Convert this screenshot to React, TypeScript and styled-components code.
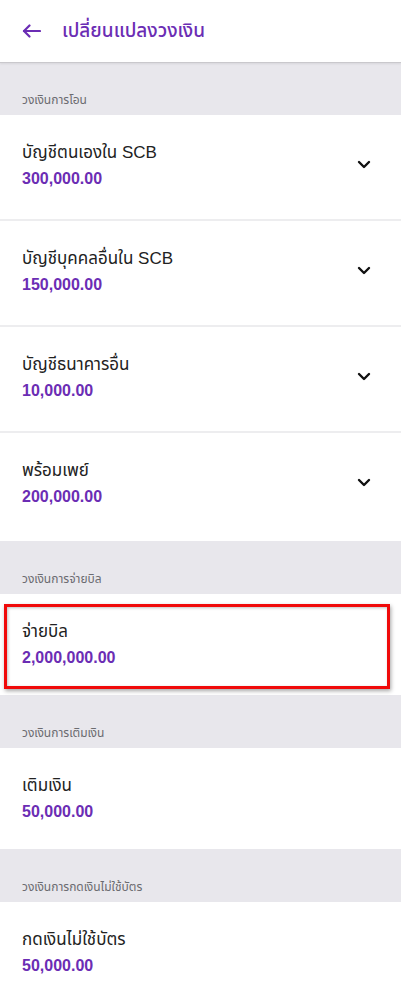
import React from "react";
import styled, { createGlobalStyle } from "styled-components";

const GlobalStyle = createGlobalStyle`
  html, body { margin: 0; padding: 0; background: #ffffff; }
  body { font-family: "Liberation Sans", "Noto Sans Thai", "Noto Sans", sans-serif; -webkit-font-smoothing: antialiased; }
  * { box-sizing: border-box; }
`;

const Page = styled.div`
  width: 401px;
  display: flex;
  flex-direction: column;
  background: #ffffff;
`;

const Header = styled.header`
  height: 63px;
  display: flex;
  align-items: center;
  gap: 21px;
  padding: 0 0 1px 22px;
  background: #ffffff;
  border-bottom: 1px solid #c9c8cc;
  box-shadow: 0 1px 2px rgba(0, 0, 0, 0.08);
  position: relative;
  z-index: 1;
`;

const BackButton = styled.button`
  width: 19px;
  height: 19px;
  padding: 0;
  border: 0;
  background: none;
  display: flex;
  align-items: center;
  justify-content: center;
  color: #6b2db4;
`;

const Title = styled.h1`
  margin: 0;
  font-size: 19px;
  font-weight: 500;
  color: #6b2db4;
  line-height: 24px;
`;

const SectionHeader = styled.div<{ $first?: boolean }>`
  height: ${(p) => (p.$first ? 52 : 53)}px;
  display: flex;
  align-items: flex-end;
  padding: 0 22px 6px;
  background: #e8e7ec;
  font-size: 12px;
  line-height: 18px;
  color: #6b6b70;
`;

const Row = styled.div<{ $tall?: boolean; $divider?: boolean; $extra?: number }>`
  position: relative;
  height: ${(p) => (p.$tall ? 106 : 101) + (p.$extra ?? 0)}px;
  display: flex;
  align-items: flex-start;
  padding: 26px 29px 0 22px;
  background: #ffffff;
  border-bottom: ${(p) => (p.$divider ? "2px solid #ededef" : "none")};
`;

const RowText = styled.div`
  flex: 1;
  display: flex;
  flex-direction: column;
`;

const RowTitle = styled.div`
  font-size: 17px;
  line-height: 24px;
  color: #222222;
`;

const Amount = styled.div`
  font-size: 16px;
  line-height: 28px;
  font-weight: 700;
  color: #6b2db4;
`;

const Chevron = styled.span`
  margin-top: 15px;
  width: 16px;
  height: 16px;
  display: flex;
  align-items: center;
  justify-content: center;
  color: #111111;
`;

const Highlight = styled.div`
  position: absolute;
  left: 4px;
  right: 11px;
  top: 10px;
  bottom: 6px;
  border: 3px solid #f00a0a;
  box-shadow: 1px 2px 4px rgba(0, 0, 0, 0.35), inset 1px 1px 3px rgba(0, 0, 0, 0.25);
  pointer-events: none;
`;

type Item = { title: string; amount: string; expandable?: boolean; highlighted?: boolean };
type Section = { label: string; items: Item[] };

const sections: Section[] = [
  {
    label: "วงเงินการโอน",
    items: [
      { title: "บัญชีตนเองใน SCB", amount: "300,000.00", expandable: true },
      { title: "บัญชีบุคคลอื่นใน SCB", amount: "150,000.00", expandable: true },
      { title: "บัญชีธนาคารอื่น", amount: "10,000.00", expandable: true },
      { title: "พร้อมเพย์", amount: "200,000.00", expandable: true },
    ],
  },
  { label: "วงเงินการจ่ายบิล", items: [{ title: "จ่ายบิล", amount: "2,000,000.00", highlighted: true }] },
  { label: "วงเงินการเติมเงิน", items: [{ title: "เติมเงิน", amount: "50,000.00" }] },
  { label: "วงเงินการกดเงินไม่ใช้บัตร", items: [{ title: "กดเงินไม่ใช้บัตร", amount: "50,000.00" }] },
];

const ArrowLeft = () => (
  <svg width="19" height="14" viewBox="0 0 19 14" fill="none" stroke="currentColor" strokeWidth="2.2" strokeLinecap="round" strokeLinejoin="round">
    <path d="M18 7H2" />
    <path d="M7.5 1.5L2 7l5.5 5.5" />
  </svg>
);

const ChevronDown = () => (
  <svg width="14" height="9" viewBox="0 0 14 9" fill="none" stroke="currentColor" strokeWidth="2.4" strokeLinecap="round" strokeLinejoin="round">
    <path d="M2 2l5 5 5-5" />
  </svg>
);

export default function App() {
  return (
    <Page>
      <GlobalStyle />
      <Header>
        <BackButton aria-label="back">
          <ArrowLeft />
        </BackButton>
        <Title>เปลี่ยนแปลงวงเงิน</Title>
      </Header>
      {sections.map((s, si) => (
        <React.Fragment key={s.label}>
          <SectionHeader $first={si === 0}>{s.label}</SectionHeader>
          {s.items.map((it, i) => {
            const last = i === s.items.length - 1;
            return (
              <Row key={it.title} $tall={it.expandable} $divider={!last} $extra={last && it.expandable ? 2 : 0}>
                <RowText>
                  <RowTitle>{it.title}</RowTitle>
                  <Amount>{it.amount}</Amount>
                </RowText>
                {it.expandable && (
                  <Chevron>
                    <ChevronDown />
                  </Chevron>
                )}
                {it.highlighted && <Highlight />}
              </Row>
            );
          })}
        </React.Fragment>
      ))}
    </Page>
  );
}
